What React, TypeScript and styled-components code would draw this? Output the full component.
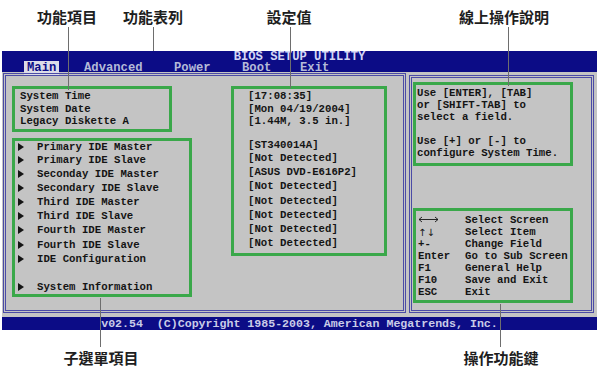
import React from "react";
import styled, { createGlobalStyle } from "styled-components";

const MONO = `"Liberation Mono", "Courier New", "DejaVu Sans Mono", monospace`;
const CJK = `"Noto Sans CJK TC", "Noto Sans CJK SC", sans-serif`;
const BLUE = "#0c0c86";
const GREEN = "#3aa84a";
const FRAME = "#4b4ba6";

const GlobalStyle = createGlobalStyle`
  html, body {
    margin: 0;
    padding: 0;
    background: #fff;
  }
  body {
    width: 608px;
    height: 375px;
    overflow: hidden;
  }
`;

const Figure = styled.div`
  position: relative;
  width: 608px;
  height: 375px;
  padding-top: 51px;
  box-sizing: border-box;
`;

const Screen = styled.div`
  margin-left: 2px;
  width: 595px;
  font-family: ${MONO};
  color: #141414;
`;

const Header = styled.header`
  background: ${BLUE};
  height: 21px;
  box-sizing: border-box;
  padding-top: 1px;
  font-weight: bold;
  font-size: 12.2px;
`;

const Title = styled.div`
  height: 10px;
  line-height: 10px;
  text-align: center;
  color: #d4d6f4;
`;

const TabRow = styled.nav`
  display: flex;
  height: 10px;
  line-height: 10px;
  padding-left: 22px;
  margin-top: 1px;
`;

const Tab = styled.span<{ $width?: number; $active?: boolean }>`
  flex: 0 0 ${(p) => (p.$width ? `${p.$width}px` : "auto")};
  span {
    padding: 0 3px;
    background: ${(p) => (p.$active ? "#dcdce8" : "transparent")};
    color: ${(p) => (p.$active ? BLUE : "#b4bad8")};
  }
`;

const Body = styled.main`
  display: flex;
  gap: 3px;
  height: 245px;
  box-sizing: border-box;
  padding: 1px 3px 4px 1px;
  background: #c4c4c4;
  font-size: 10.7px;
  font-weight: bold;
`;

const LeftPanel = styled.section`
  display: flex;
  gap: 39px;
  width: 403px;
  box-sizing: border-box;
  border: 3px double ${FRAME};
  padding: 10px 0 0 6px;
`;

const RightPanel = styled.aside`
  flex: 1;
  display: flex;
  flex-direction: column;
  margin-top: 2px;
  box-sizing: border-box;
  border: 3px double ${FRAME};
  padding: 4px 0 7px 1px;
`;

const Column = styled.div`
  display: flex;
  flex-direction: column;
  gap: 6px;
`;

const GreenBox = styled.div<{ $width: number; $pad: string; $push?: boolean }>`
  width: ${(p) => p.$width}px;
  box-sizing: border-box;
  border: 3px solid ${GREEN};
  padding: ${(p) => p.$pad};
  margin-top: ${(p) => (p.$push ? "auto" : "0")};
`;

const Line = styled.div<{ $h: number }>`
  height: ${(p) => p.$h}px;
  line-height: ${(p) => p.$h}px;
  white-space: pre;
`;

const Pointer = styled.span`
  display: inline-block;
  width: 0;
  height: 0;
  border-left: 6px solid #141414;
  border-top: 4px solid transparent;
  border-bottom: 4px solid transparent;
  margin-right: 13px;
  vertical-align: -1px;
`;

const KeyGrid = styled.div`
  display: grid;
  grid-template-columns: 47px 1fr;
  grid-auto-rows: 11.95px;
  line-height: 11.95px;
  white-space: pre;
`;

const KeyGlyph = styled.span`
  font-family: "DejaVu Sans", sans-serif;
  font-weight: normal;
  font-size: 10px;
`;

const LongArrow = () => (
  <svg width="21" height="7" viewBox="0 0 21 7" style={{ verticalAlign: "0px" }}>
    <path
      d="M1 3.5H20M4 1L1 3.5L4 6M17 1L20 3.5L17 6"
      fill="none"
      stroke="#141414"
      strokeWidth="0.9"
    />
  </svg>
);

const Footer = styled.footer`
  background: ${BLUE};
  height: 13px;
  line-height: 13px;
  text-align: center;
  color: #cacce8;
  font-weight: bold;
  font-size: 11.6px;
  white-space: pre;
`;

const Label = styled.div<{ $x: number; $y: number }>`
  position: absolute;
  left: ${(p) => p.$x}px;
  top: ${(p) => p.$y}px;
  transform: translateX(-50%);
  font-family: ${CJK};
  font-weight: bold;
  font-size: 15px;
  line-height: 16px;
  color: #1e1e1e;
  white-space: nowrap;
`;

const Leader = styled.div<{ $x: number; $top: number; $bottom: number }>`
  position: absolute;
  left: ${(p) => p.$x}px;
  top: ${(p) => p.$top}px;
  height: ${(p) => p.$bottom - p.$top}px;
  width: 1px;
  background: #6e6e6e;
`;

const tabs = [
  { label: "Main", width: 57, active: true },
  { label: "Advanced", width: 90 },
  { label: "Power", width: 68 },
  { label: "Boot", width: 58 },
  { label: "Exit" },
];

const fields = ["System Time", "System Date", "Legacy Diskette A"];
const fieldValues = ["[17:08:35]", "[Mon 04/19/2004]", "[1.44M, 3.5 in.]"];

const submenus = [
  "Primary IDE Master",
  "Primary IDE Slave",
  "Seconday IDE Master",
  "Secondary IDE Slave",
  "Third IDE Master",
  "Third IDE Slave",
  "Fourth IDE Master",
  "Fourth IDE Slave",
  "IDE Configuration",
  "",
  "System Information",
];

const devices = [
  "[ST340014A]",
  "[Not Detected]",
  "[ASUS DVD-E616P2]",
  "[Not Detected]",
  "[Not Detected]",
  "[Not Detected]",
  "[Not Detected]",
  "[Not Detected]",
];

const helpLines = [
  "Use [ENTER], [TAB]",
  "or [SHIFT-TAB] to",
  "select a field.",
  "",
  "Use [+] or [-] to",
  "configure System Time.",
];

const keys: { key: React.ReactNode; desc: string }[] = [
  { key: <LongArrow />, desc: "Select Screen" },
  { key: <KeyGlyph>↑↓</KeyGlyph>, desc: "Select Item" },
  { key: "+-", desc: "Change Field" },
  { key: "Enter", desc: "Go to Sub Screen" },
  { key: "F1", desc: "General Help" },
  { key: "F10", desc: "Save and Exit" },
  { key: "ESC", desc: "Exit" },
];

const callouts = [
  { text: "功能項目", x: 67, y: 9, line: 68, top: 27, bottom: 90 },
  { text: "功能表列", x: 153, y: 9, line: 153, top: 27, bottom: 51 },
  { text: "設定值", x: 289, y: 9, line: 290, top: 27, bottom: 88 },
  { text: "線上操作說明", x: 504, y: 9, line: 508, top: 27, bottom: 86 },
  { text: "子選單項目", x: 101, y: 350, line: 100, top: 298, bottom: 347 },
  { text: "操作功能鍵", x: 501, y: 350, line: 500, top: 304, bottom: 347 },
];

const rowHeight = (i: number) => (i === 0 ? 12 : 14.2);

export default function App() {
  return (
    <Figure>
      <GlobalStyle />
      <Screen>
        <Header>
          <Title>BIOS SETUP UTILITY</Title>
          <TabRow>
            {tabs.map((t) => (
              <Tab key={t.label} $width={t.width} $active={t.active}>
                <span>{t.label}</span>
              </Tab>
            ))}
          </TabRow>
        </Header>

        <Body>
          <LeftPanel>
            <Column>
              <GreenBox $width={160} $pad="1px 5px">
                {fields.map((f) => (
                  <Line key={f} $h={12.5}>
                    {f}
                  </Line>
                ))}
              </GreenBox>
              <GreenBox $width={180} $pad="0 3px">
                {submenus.map((s, i) => (
                  <Line key={i} $h={rowHeight(i)}>
                    {s && (
                      <>
                        <Pointer />
                        {s}
                      </>
                    )}
                  </Line>
                ))}
              </GreenBox>
            </Column>
            <Column>
              <GreenBox $width={156} $pad="1px 14px 3px">
                {fieldValues.map((v) => (
                  <Line key={v} $h={12.5}>
                    {v}
                  </Line>
                ))}
                <Line $h={11.5} />
                {devices.map((d, i) => (
                  <Line key={i} $h={rowHeight(i)}>
                    {d}
                  </Line>
                ))}
              </GreenBox>
            </Column>
          </LeftPanel>

          <RightPanel>
            <GreenBox $width={160} $pad="3.4px 0 3.5px 1px">
              {helpLines.map((h, i) => (
                <Line key={i} $h={11.9}>
                  {h}
                </Line>
              ))}
            </GreenBox>
            <GreenBox $width={160} $pad="4px 0 1.5px 2px" $push>
              <KeyGrid>
                {keys.map((k) => (
                  <React.Fragment key={k.desc}>
                    <span>{k.key}</span>
                    <span>{k.desc}</span>
                  </React.Fragment>
                ))}
              </KeyGrid>
            </GreenBox>
          </RightPanel>
        </Body>

        <Footer>{"v02.54  (C)Copyright 1985-2003, American Megatrends, Inc."}</Footer>
      </Screen>

      {callouts.map((c) => (
        <React.Fragment key={c.text}>
          <Leader $x={c.line} $top={c.top} $bottom={c.bottom} />
          <Label $x={c.x} $y={c.y}>
            {c.text}
          </Label>
        </React.Fragment>
      ))}
    </Figure>
  );
}
